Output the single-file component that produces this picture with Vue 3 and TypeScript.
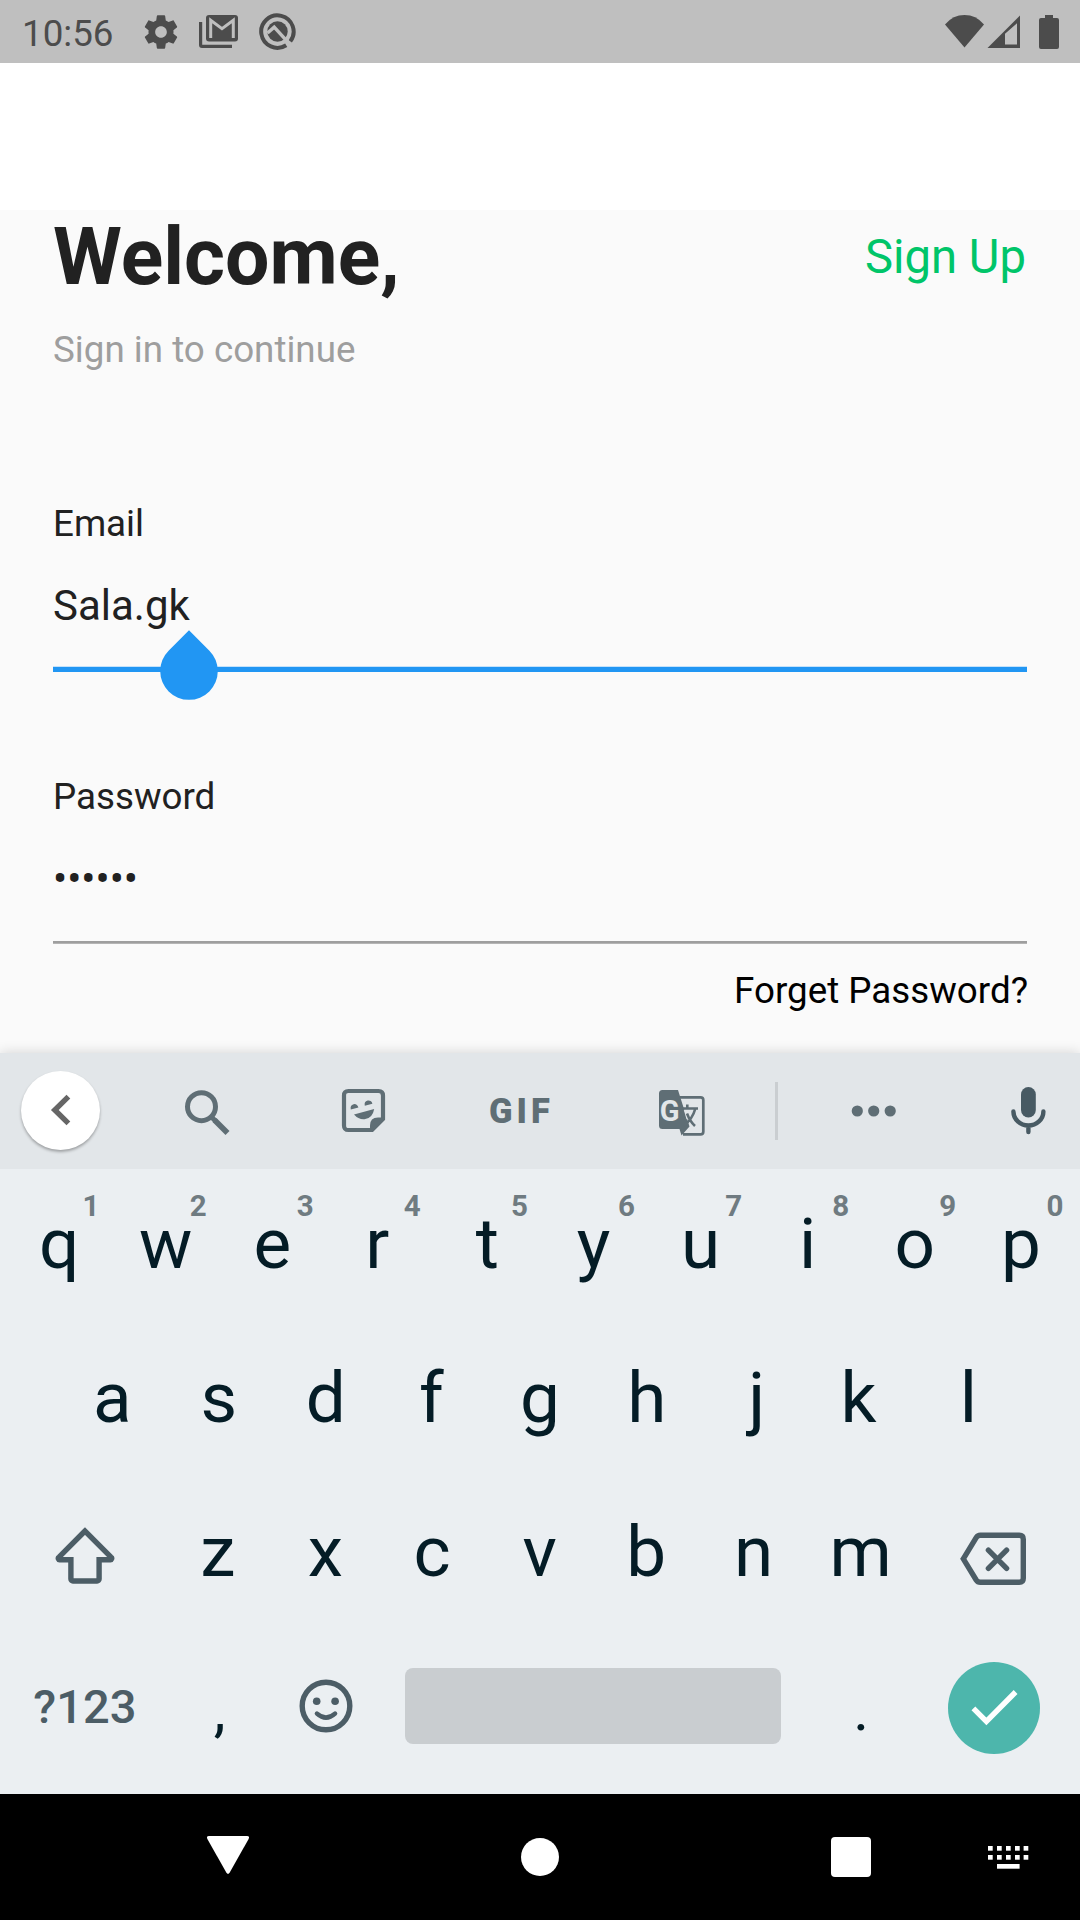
<script setup lang="ts">
import { ref } from 'vue'

interface Key {
  label: string
  hint?: string
  shift: number
}

// Optical centring: offsets the glyph so its ink, not its advance, sits mid-key.
const inkShift: Record<string, number> = {
  q: 1, w: 0.6, r: -2.2, t: 0.8, p: -1, a: 0.6, f: -1.6, j: 2.6, k: -2.8,
  z: -0.8, x: -0.4, c: -0.8, v: -0.4, b: -1, n: -0.6, m: -0.6, h: -0.4,
}

const makeKeys = (letters: string): Key[] =>
  [...letters].map((label) => ({ label, shift: inkShift[label] ?? 0 }))

const email = ref('Sala.gk')
const maskedPassword = ref('••••••')

const topRow: Key[] = makeKeys('qwertyuiop').map((key, i) => ({
  ...key,
  hint: String((i + 1) % 10),
}))
const homeRow = makeKeys('asdfghjkl')
const bottomRow = makeKeys('zxcvbnm')
const dotColumns = [0, 9, 18, 27, 35.6]
</script>

<template>
  <div class="screen">
    <header class="status">
      <span class="clock">10:56</span>
      <svg class="gear" width="40" height="40" viewBox="0 0 24 24">
        <path d="M19.43 12.98c.04-.32.07-.64.07-.98s-.03-.66-.07-.98l2.11-1.65c.19-.15.24-.42.12-.64l-2-3.46c-.12-.22-.39-.3-.61-.22l-2.49 1c-.52-.4-1.08-.73-1.69-.98l-.38-2.65C14.46 2.18 14.25 2 14 2h-4c-.25 0-.46.18-.49.42l-.38 2.65c-.61.25-1.17.59-1.69.98l-2.49-1c-.23-.09-.49 0-.61.22l-2 3.46c-.13.22-.07.49.12.64l2.11 1.65c-.04.32-.07.65-.07.98s.03.66.07.98l-2.11 1.65c-.19.15-.24.42-.12.64l2 3.46c.12.22.39.3.61.22l2.49-1c.52.4 1.08.73 1.69.98l.38 2.65c.03.24.24.42.49.42h4c.25 0 .46-.18.49-.42l.38-2.65c.61-.25 1.17-.59 1.69-.98l2.49 1c.23.09.49 0 .61-.22l2-3.46c.12-.22.07-.49-.12-.64l-2.11-1.65zM12 15.5c-1.93 0-3.5-1.57-3.5-3.5s1.57-3.5 3.5-3.5 3.5 1.57 3.5 3.5-1.57 3.5-3.5 3.5z" />
      </svg>
      <svg class="mail" width="39" height="33" viewBox="0 0 39 33">
        <path d="M0 7h3.2v22.8H33V33H3Q0 33 0 30Z" />
        <rect x="7" y="0" width="32" height="26.5" rx="3" />
        <path d="M11.7 23V5.2L23 13.6 34.3 5.2V23" fill="none" stroke="#bfbfbf" stroke-width="3" />
      </svg>
      <svg class="quick" width="37" height="37" viewBox="0 0 37 37">
        <path d="M27.2 32.2A16.2 16.2 0 1 1 31.3 28.4" fill="none" stroke="#4c4c4c" stroke-width="4" />
        <circle cx="18.5" cy="18.5" r="10.2" />
        <path d="M8.5 20 15.2 14.2 31.2 31.6" fill="none" stroke="#bfbfbf" stroke-width="3.4" />
      </svg>
      <svg class="radio" width="114" height="34" viewBox="0 0 114 34">
        <path d="M0 9.4Q8 0 19.5 0T39 9.4L19.5 32.6Z" />
        <path fill-rule="evenodd" d="M42.5 33 75 .6V33ZM60 18.8V29.5H72V8.2Z" />
        <path d="M100 0h8v3h4q2 0 2 2v27q0 2-2 2H96q-2 0-2-2V5q0-2 2-2h4Z" />
      </svg>
    </header>

    <div class="appbar"></div>

    <main class="form">
      <div class="heading">
        <h1>Welcome,</h1>
        <a class="signup">Sign Up</a>
      </div>
      <p class="subtitle">Sign in to continue</p>

      <label class="email-label">Email</label>
      <div class="field focused">
        <span class="value">{{ email }}</span>
        <svg class="handle" width="58" height="70" viewBox="0 0 58 70">
          <path d="M29 .3 49.4 20.7A28.8 28.8 0 1 1 8.6 20.7Z" />
        </svg>
      </div>

      <label class="password-label">Password</label>
      <div class="field idle">
        <span class="value">{{ maskedPassword }}</span>
      </div>
      <a class="forgot">Forget Password?</a>
    </main>

    <section class="keyboard">
      <div class="tools">
        <span class="back">
          <svg width="22" height="32" viewBox="0 0 22 32">
            <path d="M18.4 2.6 4.8 16 18.4 29.4" fill="none" stroke="#666" stroke-width="5.4" />
          </svg>
        </span>
        <svg class="search" width="46" height="46" viewBox="0 0 46 46">
          <circle cx="17.5" cy="17.7" r="14" />
          <path d="M30.5 31 43.5 44" stroke-width="5.6" />
          <path d="M28 28.5 32 32.5" stroke-width="5" />
        </svg>
        <svg class="sticker" width="45" height="45" viewBox="0 0 45 45">
          <path d="M7.5 3H37.5Q42 3 42 7.5V31L31 42H7.5Q3 42 3 37.5V7.5Q3 3 7.5 3Z" fill="none" stroke="#5f6e75" stroke-width="4.2" />
          <path d="M43.5 29.5H37Q29 29.5 29 37.5V44H31.5L43.5 32Z" />
          <path d="M9.8 21.5A3.9 4.3 0 1 1 17.4 19.4Z" />
          <path d="M23.8 17.8A3.9 4.3 0 1 1 31.4 15.7Z" />
          <path d="M13 26.6 33.2 21Q31.5 30.5 23.5 31.3 17.5 31.8 13 26.6Z" />
        </svg>
        <span class="gif">GIF</span>
        <svg class="translate" width="48" height="48" viewBox="0 0 48 48">
          <path d="M22 8.3H42.5Q45.3 8.3 45.3 11V42.7Q45.3 45.4 42.5 45.4H25" fill="none" stroke="#5f6e75" stroke-width="2.7" />
          <path d="M4.5 1H20L31.5 37.5 23.5 46.6 21.5 40H4.5Q1 40 1 36.5V4.5Q1 1 4.5 1Z" />
          <path d="M25.8 21 28.6 30.5 33 22Z" fill="#e2e6e9" />
          <text x="1.8" y="32" class="glyph-g">G</text>
          <path d="M24.5 19.5H40M29.3 15.5V19.5M37.2 20Q34.5 30 25.8 36.8M29 24.5Q32 32.5 37 37" fill="none" stroke="#5f6e75" stroke-width="2.6" />
        </svg>
        <span class="divider"></span>
        <svg class="more" width="46" height="12" viewBox="0 0 46 12">
          <circle cx="6.3" cy="6" r="5.6" />
          <circle cx="22.7" cy="6" r="5.6" />
          <circle cx="39.2" cy="6" r="5.6" />
        </svg>
        <svg class="mic" width="36" height="48" viewBox="0 0 36 48">
          <rect x="11" y="0" width="14.8" height="30.4" rx="7.4" />
          <path d="M3.4 24.5A15 14 0 0 0 33.4 24.5M18.4 39V45" fill="none" stroke="#485a63" stroke-width="4.4" stroke-linecap="round" />
        </svg>
      </div>

      <div class="row">
        <span v-for="key in topRow" :key="key.label" class="key">
          <span :style="{ transform: `translateX(${key.shift}px)` }">{{ key.label }}</span>
          <sup class="hint">{{ key.hint }}</sup>
        </span>
      </div>
      <div class="row">
        <span v-for="key in homeRow" :key="key.label" class="key">
          <span :style="{ transform: `translateX(${key.shift}px)` }">{{ key.label }}</span>
        </span>
      </div>
      <div class="row">
        <span class="key wide">
          <svg class="outline" width="60" height="58" viewBox="0 0 60 58">
            <path d="M30 4 4 30.1a1.4 1.4 0 0 0 .9 2.6H15.9V52a2 2 0 0 0 2 2H42.1a2 2 0 0 0 2-2V32.7H55.1a1.4 1.4 0 0 0 .9-2.6Z" />
          </svg>
        </span>
        <span v-for="key in bottomRow" :key="key.label" class="key">
          <span :style="{ transform: `translateX(${key.shift}px)` }">{{ key.label }}</span>
        </span>
        <span class="key wide">
          <svg class="outline delete" width="70" height="58" viewBox="0 0 70 58">
            <path d="M5.3 28.8 18.2 7.6Q19.7 5.2 22.3 5.2H61.3q4 0 4 4V48.3q0 4-4 4H22.3Q19.7 52.3 18.2 50Z" />
            <path d="M30.4 20.2 48.6 38.4M48.6 20.2 30.4 38.4" stroke-linecap="round" />
          </svg>
        </span>
      </div>
      <div class="row">
        <span class="key wide symbols">?123</span>
        <span class="key mark comma">,</span>
        <span class="key">
          <svg class="outline smile" width="54" height="54" viewBox="0 0 54 54">
            <circle cx="27" cy="27" r="23.8" />
            <circle cx="17.7" cy="22.2" r="3.8" class="eye" />
            <circle cx="36.1" cy="22.2" r="3.8" class="eye" />
            <path d="M18 34.6Q27 42.6 36 34.6" stroke-width="4.6" stroke-linecap="round" />
          </svg>
        </span>
        <span class="key space"><i></i></span>
        <span class="key mark">.</span>
        <span class="key wide">
          <span class="done">
            <svg width="48" height="38" viewBox="0 0 48 38">
              <path d="M3.4 19.4 16.4 32.4 45.6 3" fill="none" stroke="#fff" stroke-width="5.4" />
            </svg>
          </span>
        </span>
      </div>
    </section>

    <nav class="nav">
      <svg class="nav-back" width="42" height="38" viewBox="0 0 42 38">
        <path d="M2 0H40Q43 0 41.6 3L22.6 36.8Q21 39 19.4 36.8L.4 3Q-1 0 2 0Z" />
      </svg>
      <span class="nav-home"></span>
      <span class="nav-recent"></span>
      <svg class="nav-ime" width="41" height="23" viewBox="0 0 41 23">
        <template v-for="x in dotColumns" :key="x">
          <rect :x="x" y="0" width="4.7" height="4.7" />
          <rect :x="x" y="9" width="4.7" height="4.7" />
        </template>
        <rect x="9" y="18" width="22.6" height="4.7" />
      </svg>
    </nav>
  </div>
</template>

<style>
html,
body {
  margin: 0;
  background: #fafafa;
}
</style>

<style scoped>
.screen {
  width: 1080px;
  height: 1920px;
  display: flex;
  flex-direction: column;
  overflow: hidden;
  background: #fafafa;
  color: #212121;
  font-family: Roboto, 'Liberation Sans', sans-serif;
}

svg {
  display: block;
  flex: none;
}

/* status bar */
.status {
  height: 63px;
  flex: none;
  display: flex;
  align-items: center;
  box-sizing: border-box;
  padding-left: 22px;
  background: #bfbfbf;
  color: #4c4c4c;
  fill: #4c4c4c;
}
.clock {
  width: 119px;
  font-size: 36.75px;
  line-height: 63px;
  padding-top: 4px;
}
.mail {
  margin-left: 18px;
}
.quick {
  margin-left: 20.5px;
}
.radio {
  margin-left: auto;
  margin-right: 21px;
}

.appbar {
  height: 147px;
  flex: none;
  background: #fff;
}

/* login form */
.form {
  height: 843px;
  flex: none;
  display: flex;
  flex-direction: column;
  box-sizing: border-box;
  padding: 0 53px;
  font-size: 36.75px;
  line-height: 44px;
}
.heading {
  height: 94px;
  display: flex;
  justify-content: space-between;
  align-items: center;
}
h1 {
  margin: 0;
  font-size: 78.75px;
  line-height: 94px;
  font-weight: 700;
}
.signup {
  margin-right: 1px;
  font-size: 47.25px;
  line-height: 94px;
  color: #00c569;
}
.subtitle {
  margin: 24px 0 0;
  color: #9e9e9e;
}
.email-label {
  margin-top: 130px;
}
.password-label {
  margin-top: 103px;
}
.field {
  position: relative;
  box-sizing: border-box;
  font-size: 42px;
  line-height: 50px;
}
.focused {
  height: 91px;
  margin-top: 35px;
  border-bottom: 5px solid #2196f3;
  box-shadow: inset 0 -1px #c5e2fa;
}
.idle {
  height: 89px;
  margin-top: 35px;
  border-bottom: 2px solid #9e9e9e;
  box-shadow: 0 1px #b4b4b4;
}
.value {
  display: block;
}
.handle {
  position: absolute;
  left: 107px;
  top: 49px;
  fill: #2196f3;
}
.forgot {
  margin: 26px -1px 0 0;
  text-align: right;
  color: #000;
}

/* keyboard */
.keyboard {
  height: 741px;
  flex: none;
  background: #ebeff2;
  box-shadow: 0 0 12px rgba(0, 0, 0, 0.16);
  color: #041c26;
}
.tools {
  height: 116px;
  display: flex;
  align-items: center;
  background: #e2e6e9;
  fill: #5f6e75;
}
.back {
  width: 79px;
  height: 79px;
  margin: 0 0 2px 21px;
  flex: none;
  display: flex;
  align-items: center;
  justify-content: center;
  border-radius: 50%;
  background: #fff;
  box-shadow: 0 2px 3px rgba(0, 0, 0, 0.3);
}
.search {
  margin: 2px 0 0 84px;
  fill: none;
  stroke: #5f6e75;
  stroke-width: 5px;
}
.sticker {
  margin: 0 0 1px 111px;
}
.gif {
  width: 64px;
  margin-left: 103px;
  font-size: 34.5px;
  line-height: 40px;
  font-weight: 900;
  letter-spacing: 4px;
  color: #5f6e75;
}
.translate {
  margin: 4px 0 0 105px;
}
.glyph-g {
  font: 700 29px Roboto, sans-serif;
  fill: #e2e6e9;
}
.divider {
  width: 3px;
  height: 58px;
  margin-left: 69px;
  background: #caced1;
}
.more {
  margin-left: 73px;
}
.mic {
  margin-left: 113px;
  fill: #485a63;
}
.row {
  height: 154.33px;
  display: flex;
  justify-content: center;
}
.key {
  position: relative;
  width: 107.1px;
  box-sizing: border-box;
  padding-bottom: 5px;
  flex: none;
  display: flex;
  align-items: center;
  justify-content: center;
  font-size: 71px;
  line-height: 84px;
}
.wide {
  width: 160.6px;
}
.space {
  width: 428.4px;
}
.space i {
  width: 376px;
  height: 76px;
  margin: 0 1px 2px 0;
  border-radius: 8px;
  background: #c9cdd0;
}
.mark {
  padding-top: 7px;
  font-size: 60px;
}
.comma {
  padding-left: 2px;
}
.hint {
  position: absolute;
  left: 76.5px;
  top: 19px;
  width: 20px;
  text-align: center;
  font-size: 29.5px;
  line-height: 36px;
  font-weight: 700;
  color: #6f7b81;
}
.outline {
  margin-top: 7px;
  fill: none;
  stroke: #4c5d66;
  stroke-width: 5.4px;
}
.delete {
  margin: 13px 4px 0 0;
}
.smile {
  margin-top: -1px;
}
.eye {
  fill: #4c5d66;
  stroke: none;
}
.symbols {
  font-size: 47px;
  font-weight: 500;
  color: #4c5d66;
}
.done {
  width: 92px;
  height: 92px;
  margin: 2px 2px 0 0;
  display: flex;
  align-items: center;
  justify-content: center;
  border-radius: 50%;
  background: #4db6ac;
}

/* system navigation */
.nav {
  height: 126px;
  flex: none;
  display: flex;
  align-items: center;
  background: #000;
  fill: #fff;
}
.nav-back {
  margin: 0 0 5px 207px;
}
.nav-home {
  width: 38px;
  height: 38px;
  margin-left: 272px;
  border-radius: 50%;
  background: #fff;
}
.nav-recent {
  width: 40px;
  height: 40px;
  margin-left: 272px;
  border-radius: 4px;
  background: #fff;
}
.nav-ime {
  margin-left: 116.5px;
}
</style>
